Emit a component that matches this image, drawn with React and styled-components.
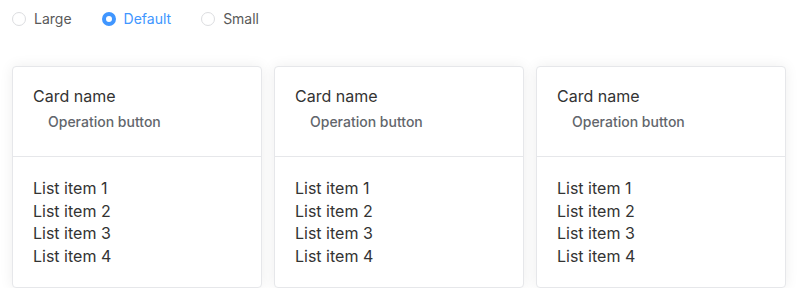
import React, { useState } from "react";
import styled, { createGlobalStyle } from "styled-components";

const Global = createGlobalStyle`
  html, body { margin: 0; padding: 0; background: #fff; }
  body { font-family: Inter, "Noto Sans", sans-serif; -webkit-font-smoothing: antialiased; }
`;

const Page = styled.div`
  padding: 8px 12px 0 12px;
`;

const RadioGroup = styled.div`
  display: flex;
  align-items: center;
  height: 22px;
`;

const RadioLabel = styled.label`
  display: flex;
  align-items: center;
  gap: 8px;
  font-size: 14px;
  line-height: 22px;
  color: ${(p) => (p.$checked ? "#4096ff" : "#595959")};
  margin-right: 30px;
  cursor: pointer;
`;

const Dot = styled.span`
  box-sizing: border-box;
  width: 14px;
  height: 14px;
  border-radius: 50%;
  border: ${(p) => (p.$checked ? "4px solid #4096ff" : "1px solid #dcdde0")};
  background: #fff;
`;

const Cards = styled.div`
  display: grid;
  grid-template-columns: repeat(3, 250px);
  gap: 12px;
  margin-top: 36px;
`;

const Card = styled.div`
  box-sizing: border-box;
  height: 222px;
  background: #fff;
  border: 1px solid #e6e7ea;
  border-radius: 4px;
  box-shadow: 0 0 14px rgba(0, 0, 0, 0.07);
  display: flex;
  flex-direction: column;
`;

const Header = styled.div`
  box-sizing: border-box;
  height: 90px;
  padding: 17px 20px 0 20px;
  border-bottom: 1px solid #e6e7ea;
`;

const Title = styled.div`
  font-size: 16px;
  line-height: 24px;
  color: #333;
`;

const OpButton = styled.button`
  all: unset;
  display: block;
  margin: 3px 0 0 15px;
  font-family: Inter, "Noto Sans", sans-serif;
  font-size: 14px;
  font-weight: 500;
  line-height: 22px;
  color: #62666c;
  cursor: pointer;
`;

const Body = styled.ul`
  list-style: none;
  margin: 0;
  padding: 20px 20px 0 20px;
`;

const Item = styled.li`
  font-size: 16px;
  line-height: 22.5px;
  color: #333;
`;

const sizes = ["Large", "Default", "Small"];

export default function App() {
  const [size, setSize] = useState("Default");
  return (
    <Page>
      <Global />
      <RadioGroup>
        {sizes.map((s) => (
          <RadioLabel key={s} $checked={s === size} onClick={() => setSize(s)}>
            <Dot $checked={s === size} />
            {s}
          </RadioLabel>
        ))}
      </RadioGroup>
      <Cards>
        {[0, 1, 2].map((i) => (
          <Card key={i}>
            <Header>
              <Title>Card name</Title>
              <OpButton>Operation button</OpButton>
            </Header>
            <Body>
              {[1, 2, 3, 4].map((n) => (
                <Item key={n}>List item {n}</Item>
              ))}
            </Body>
          </Card>
        ))}
      </Cards>
    </Page>
  );
}
